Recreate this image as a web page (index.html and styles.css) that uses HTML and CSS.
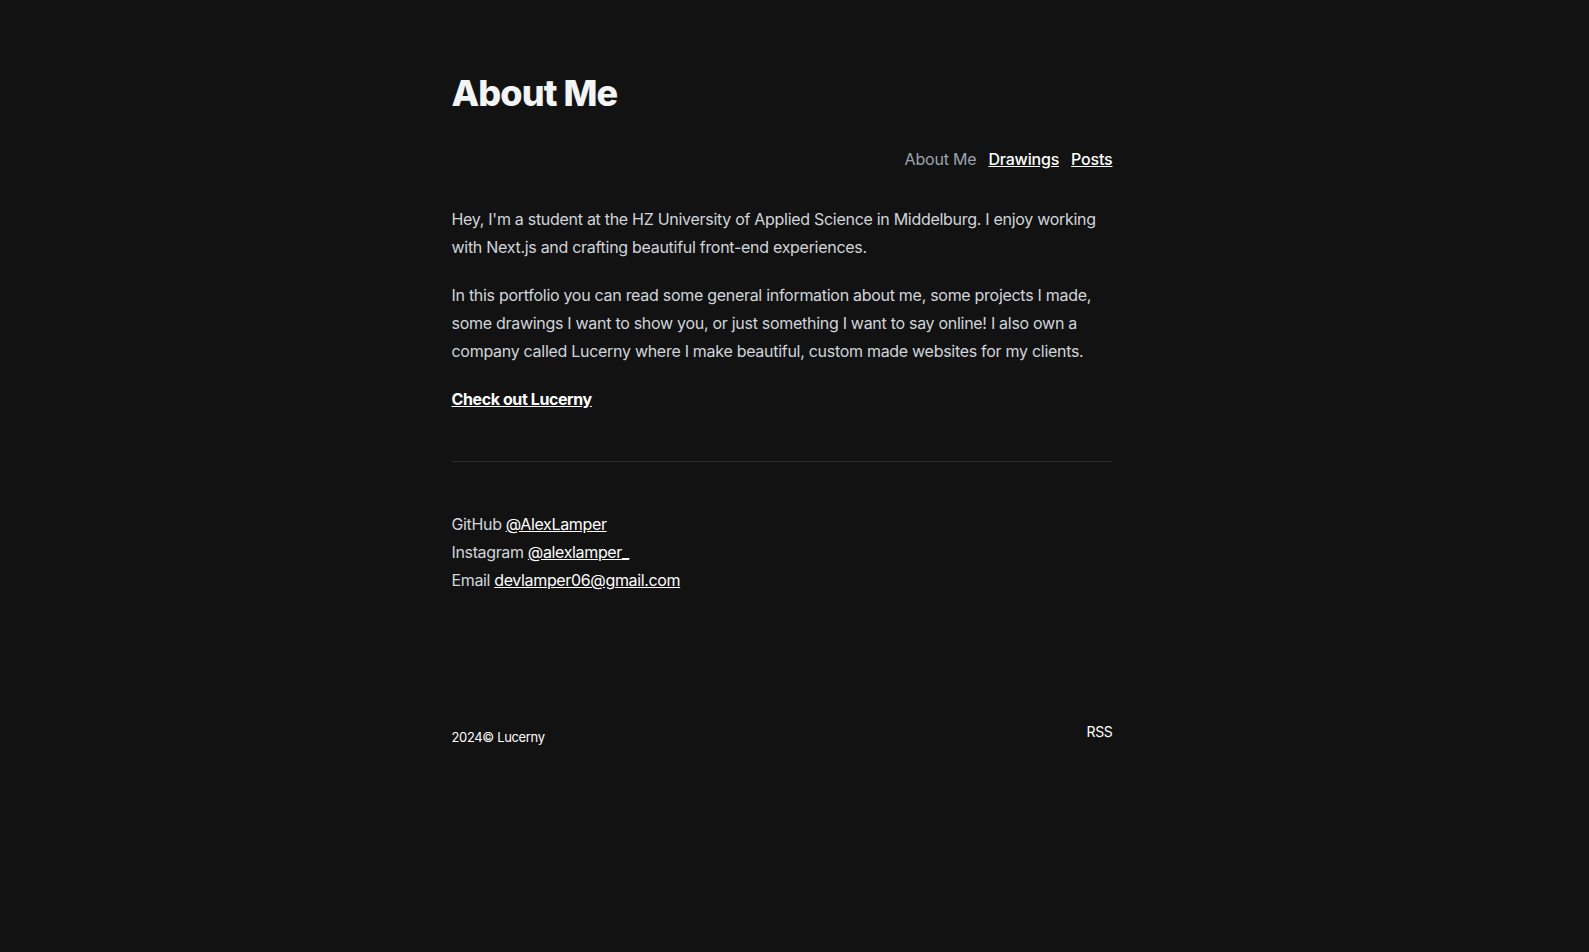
FILE: index.html
```html
<!DOCTYPE html>
<html lang="en">
<head>
<meta charset="utf-8">
<title>About Me</title>
<link rel="stylesheet" href="styles.css">
</head>
<body>
<div class="page">
  <header class="header">
    <h1 class="title">About Me</h1>
    <nav class="nav">
      <span class="nav-current">About Me</span>
      <a href="#" class="nav-link">Drawings</a>
      <a href="#" class="nav-link">Posts</a>
    </nav>
  </header>
  <main class="prose">
    <p>Hey, I'm a student at the HZ University of Applied Science in Middelburg. I enjoy working with Next.js and crafting beautiful front-end experiences.</p>
    <p>In this portfolio you can read some general information about me, some projects I made, some drawings I want to show you, or just something I want to say online! I also own a company called Lucerny where I make beautiful, custom made websites for my clients.</p>
    <p><a href="#" class="cta">Check out Lucerny</a></p>
    <hr class="divider">
    <p class="contacts">
      GitHub <a href="#">@AlexLamper</a><br>
      Instagram <a href="#">@alexlamper_</a><br>
      Email <a href="#">devlamper06@gmail.com</a>
    </p>
  </main>
  <footer class="footer">
    <span class="copyright">2024© Lucerny</span>
    <a href="#" class="rss">RSS</a>
  </footer>
</div>
</body>
</html>
```
FILE: styles.css
```css
html, body {
  margin: 0;
  padding: 0;
  background: #121212;
}
body {
  font-family: Inter, "Noto Sans", sans-serif;
  letter-spacing: -0.018em;
  color: #d1d5db;
  min-height: 952px;
}
.page {
  width: 661px;
  margin-left: calc(50% - 343px);
  padding-top: 73px;
}
.header {
  display: flex;
  flex-direction: column;
}
.title {
  margin: 0;
  font-size: 36px;
  line-height: 40px;
  font-weight: 800;
  letter-spacing: -0.025em;
  color: #f3f4f6;
}
.nav {
  margin-top: 34px;
  display: flex;
  justify-content: flex-end;
  gap: 12px;
  font-size: 16px;
  line-height: 24px;
  letter-spacing: -0.012em;
}
.nav-current {
  color: #9ca3af;
}
.nav-link {
  color: #ffffff;
  text-decoration: underline;
  font-weight: 500;
}
.prose {
  margin-top: 34px;
  font-size: 16px;
  line-height: 28px;
}
.prose p {
  margin: 20px 0;
}
.prose a {
  color: #ffffff;
  text-decoration: underline;
}
.prose a.cta {
  font-weight: 700;
  letter-spacing: -0.025em;
}
.divider {
  border: 0;
  border-top: 1px solid #252a33;
  margin: 48px 0;
}
.prose p.contacts {
  margin-bottom: 0;
  letter-spacing: -0.022em;
}
.footer {
  margin-top: 128px;
  display: flex;
  justify-content: space-between;
  align-items: flex-start;
  font-size: 14px;
  line-height: 20px;
  letter-spacing: -0.025em;
  color: #ffffff;
}
.copyright {
  padding-top: 5px;
  font-size: 13px;
}
.rss {
  color: #ffffff;
  text-decoration: none;
}
```
